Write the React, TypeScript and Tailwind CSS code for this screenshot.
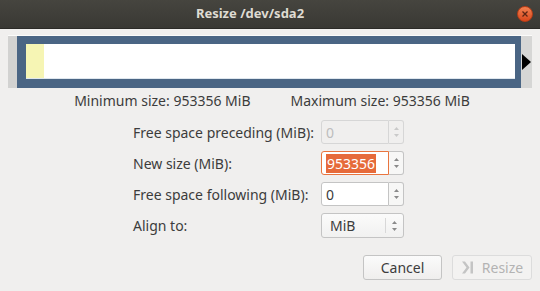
import React from 'react';

const font = { fontFamily: '"Noto Sans", "DejaVu Sans", sans-serif' };

const SpinArrows: React.FC<{ muted?: boolean }> = ({ muted }) => (
  <svg width="7" height="14" viewBox="0 0 7 14">
    <path d="M3.5 2 L6 5 L1 5 Z" fill={muted ? '#c9c9c9' : '#8a8a8a'} />
    <path d="M3.5 12 L6 9 L1 9 Z" fill={muted ? '#c9c9c9' : '#8a8a8a'} />
  </svg>
);

const SpinEntry: React.FC<{ value: string; disabled?: boolean; focused?: boolean }> = ({ value, disabled, focused }) => (
  <div className="flex h-[24px] w-[83px]">
    <div
      className={`flex-1 flex items-center pl-[4px] rounded-l-[3px] border ${
        focused ? 'border-[#e9753f] bg-white' : disabled ? 'border-[#d6d6d6] bg-[#f0efee]' : 'border-[#c4c4c4] bg-white'
      }`}
    >
      {focused ? (
        <span className="bg-[#e66a3a] text-white px-[1px] leading-[19px]">{value}</span>
      ) : (
        <span className={disabled ? 'text-[#bdbdbd]' : 'text-[#3c3c3c]'}>{value}</span>
      )}
    </div>
    <div
      className={`w-[15px] flex items-center justify-center rounded-r-[3px] border border-l-0 ${
        disabled ? 'border-[#d6d6d6] bg-[#f0efee]' : 'border-[#c4c4c4] bg-[#f7f7f6]'
      }`}
    >
      <SpinArrows muted={disabled} />
    </div>
  </div>
);

export default function App() {
  return (
    <div className="w-[540px] h-[291px] overflow-hidden bg-[#f0efee] text-[14px] text-[#3c3c3c] flex flex-col" style={font}>
      {/* Title bar */}
      <div className="h-[29px] flex items-center bg-gradient-to-b from-[#46453f] to-[#393834] border-b border-[#2b2a27]">
        <div className="flex-1 text-center text-[13px] font-bold text-[#dfdbd2] pr-[17px]">Resize /dev/sda2</div>
        <div className="w-[16px] h-[16px] mr-[7px] rounded-full bg-gradient-to-b from-[#f2804f] to-[#d9461a] border border-[#b83d17] flex items-center justify-center">
          <svg width="6" height="6" viewBox="0 0 6 6">
            <path d="M0.5 0.5 L5.5 5.5 M5.5 0.5 L0.5 5.5" stroke="#5c2514" strokeWidth="1.3" />
          </svg>
        </div>
      </div>

      {/* Partition bar */}
      <div className="ml-[8px] mt-[6px] w-[524px] h-[53px] flex border-t border-[#fbfbfa]">
        <div className="w-[9px] bg-[#d2d2d1]" />
        <div className="flex-1 bg-[#4a6584] pl-[9px] pr-[6px] pt-[8px] pb-[9px] flex">
          <div className="flex-1 flex border-b border-[#dfe7ee]">
            <div className="w-[18px] bg-[#f6f5b4]" />
            <div className="flex-1 bg-white" />
          </div>
        </div>
        <div className="w-[11px] bg-[#d6d6d5] flex items-center">
          <svg width="11" height="18" viewBox="0 0 11 18">
            <path d="M1 1 L10 9 L1 17 Z" fill="#000" />
          </svg>
        </div>
      </div>

      {/* Size info */}
      <div className="mt-[4px] flex justify-center gap-[40px] pl-[4px] leading-[18px]">
        <span>Minimum size: 953356 MiB</span>
        <span>Maximum size: 953356 MiB</span>
      </div>

      {/* Form */}
      <div className="mt-[10px] ml-[133px] grid grid-cols-[188px_84px] gap-y-[7px] items-center">
        <span>Free space preceding (MiB):</span>
        <SpinEntry value="0" disabled />
        <span>New size (MiB):</span>
        <SpinEntry value="953356" focused />
        <span>Free space following (MiB):</span>
        <SpinEntry value="0" />
        <span>Align to:</span>
        <div className="h-[25px] w-[83px] flex items-center rounded-[3px] border border-[#c4c4c4] bg-gradient-to-b from-[#fbfbfb] to-[#f1f1f0]">
          <span className="flex-1 pl-[8px]">MiB</span>
          <div className="h-[15px] border-l border-[#d8d8d8]" />
          <div className="w-[17px] flex justify-center">
            <SpinArrows />
          </div>
        </div>
      </div>

      {/* Buttons */}
      <div className="mt-[17px] flex justify-end gap-[10px] pr-[8px]">
        <button className="w-[79px] h-[25px] rounded-[3px] border border-[#c4c4c4] bg-gradient-to-b from-[#fbfbfb] to-[#efeeed] text-[#3c3c3c]">
          Cancel
        </button>
        <button className="w-[80px] h-[25px] rounded-[3px] border border-[#dcdcdc] bg-[#f3f2f1] text-[#b3b3b3] flex items-center justify-center gap-[8px]">
          <svg width="13" height="15" viewBox="0 0 13 15">
            <path d="M1 1.5 L5.5 7.5 L1 13.5 H4 L8.5 7.5 L4 1.5 Z" fill="#c4c4c4" />
            <rect x="9.5" y="1.5" width="2.5" height="12" fill="#c4c4c4" />
          </svg>
          <span>Resize</span>
        </button>
      </div>
    </div>
  );
}
